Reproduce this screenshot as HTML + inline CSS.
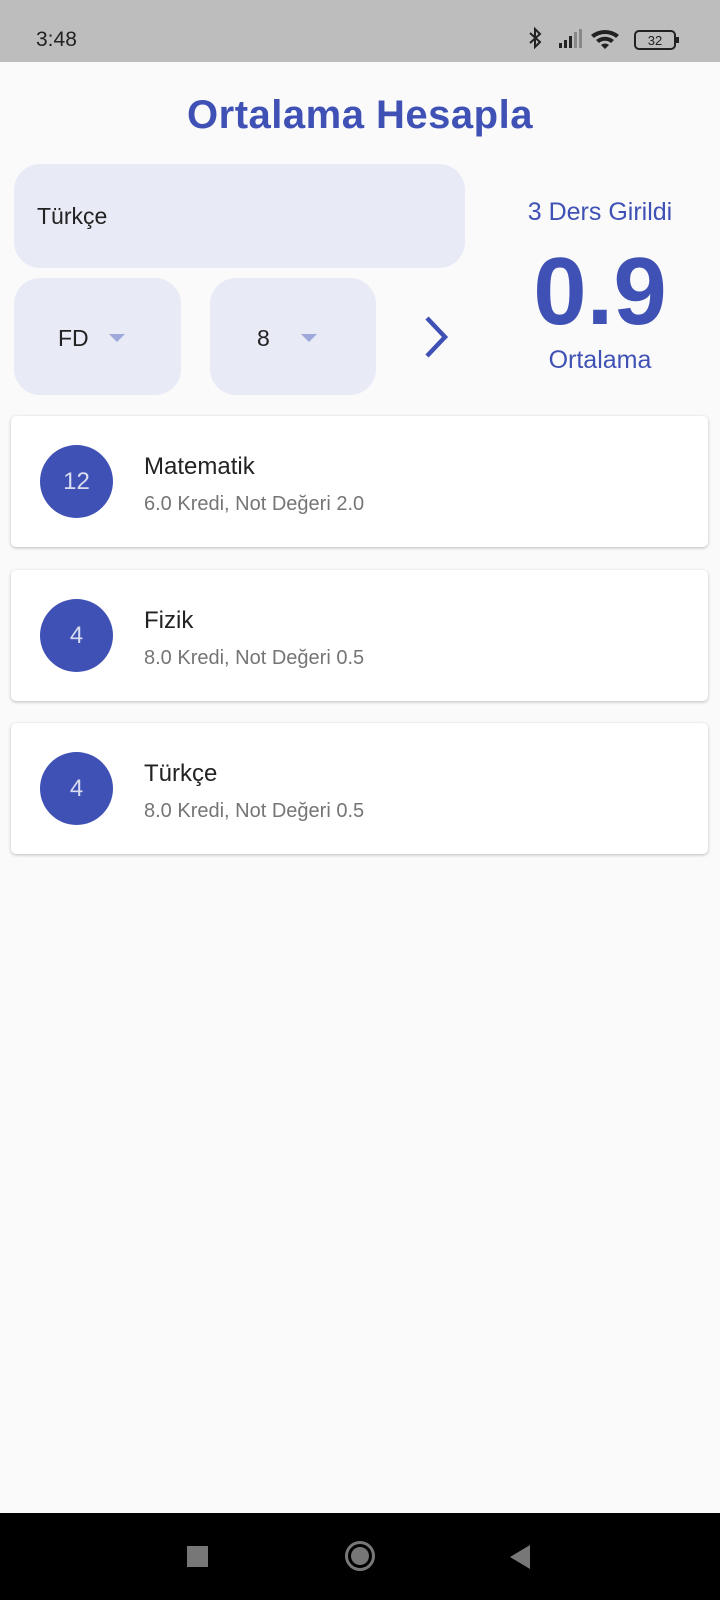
<!DOCTYPE html>
<html><head><meta charset="utf-8"><style>
*{margin:0;padding:0;box-sizing:border-box}
body{width:720px;height:1600px;background:#fafafa;font-family:"Liberation Sans",sans-serif;position:relative;overflow:hidden}
.abs{position:absolute}
.sb{left:0;top:0;width:720px;height:62px;background:#bdbdbd}
.time{left:36px;top:28px;font-size:21px;color:#222}
.title{left:0;width:720px;top:93px;text-align:center;font-size:40px;font-weight:bold;color:#3f51b5;letter-spacing:0.5px}
.field{background:#e8eaf6;border-radius:26px}
.blue{color:#3f51b5}
.card{left:11px;width:697px;height:131px;background:#fff;border-radius:5px;box-shadow:0 1px 3px rgba(0,0,0,.25)}
.av{left:29px;top:29px;width:73px;height:73px;border-radius:50%;background:#3f51b5;color:#d9dcf0;font-size:24px;text-align:center;line-height:73px}
.ct{left:133px;top:37px;font-size:24px;color:#222}
.cs{left:133px;top:77px;font-size:20px;color:#757575}
.tri{width:0;height:0;border-left:8px solid transparent;border-right:8px solid transparent;border-top:8px solid #9fa8da}
.nav{left:0;top:1513px;width:720px;height:87px;background:#000}
</style></head><body>
<div class="abs sb"></div>
<div class="abs time">3:48</div>
<svg class="abs" style="left:527px;top:26px" width="160" height="28" viewBox="0 0 160 28">
<path d="M3 7l10 9-5 5V3l5 5-10 9" fill="none" stroke="#222" stroke-width="2"/>
<rect x="32" y="17" width="3" height="5" fill="#222"/><rect x="37" y="14" width="3" height="8" fill="#222"/><rect x="42" y="10" width="3" height="12" fill="#222"/><rect x="47" y="6" width="3" height="16" fill="#888"/><rect x="52" y="3" width="3" height="19" fill="#888"/>
<path d="M64 9a22 22 0 0 1 28 0l-3 3a17 17 0 0 0-22 0zM69 14a14 14 0 0 1 18 0l-3 3a9 9 0 0 0-12 0zM74 19a6 6 0 0 1 8 0l-4 4z" fill="#222"/>
<rect x="108" y="5" width="40" height="18" rx="4" fill="none" stroke="#222" stroke-width="2"/><rect x="149" y="11" width="3" height="6" fill="#222"/>
<text x="128" y="19" font-size="13" text-anchor="middle" fill="#222" font-family="Liberation Sans">32</text>
</svg>
<div class="abs title">Ortalama Hesapla</div>
<div class="abs field" style="left:14px;top:164px;width:451px;height:104px"></div>
<div class="abs" style="left:37px;top:203px;font-size:23px;color:#222">Türkçe</div>
<div class="abs field" style="left:14px;top:278px;width:167px;height:117px"></div>
<div class="abs" style="left:58px;top:325px;font-size:23px;color:#222">FD</div>
<div class="abs tri" style="left:109px;top:334px"></div>
<div class="abs field" style="left:210px;top:278px;width:166px;height:117px"></div>
<div class="abs" style="left:257px;top:325px;font-size:23px;color:#222">8</div>
<div class="abs tri" style="left:301px;top:334px"></div>
<svg class="abs" style="left:422px;top:314px" width="30" height="46" viewBox="0 0 30 46"><path d="M5 4l18 19-18 19" fill="none" stroke="#3f51b5" stroke-width="4.5"/></svg>
<div class="abs blue" style="left:480px;width:240px;text-align:center;top:198px;font-size:25px">3 Ders Girildi</div>
<div class="abs blue" style="left:480px;width:240px;text-align:center;top:242px;font-size:96px;font-weight:bold;line-height:100px">0.9</div>
<div class="abs blue" style="left:480px;width:240px;text-align:center;top:346px;font-size:25px">Ortalama</div>

<div class="abs card" style="top:416px"><div class="abs av">12</div><div class="abs ct">Matematik</div><div class="abs cs">6.0 Kredi, Not Değeri 2.0</div></div>
<div class="abs card" style="top:570px"><div class="abs av">4</div><div class="abs ct">Fizik</div><div class="abs cs">8.0 Kredi, Not Değeri 0.5</div></div>
<div class="abs card" style="top:723px"><div class="abs av">4</div><div class="abs ct">Türkçe</div><div class="abs cs">8.0 Kredi, Not Değeri 0.5</div></div>

<div class="abs nav"></div>
<div class="abs" style="left:187px;top:1546px;width:21px;height:21px;background:#777"></div>
<div class="abs" style="left:345px;top:1541px;width:30px;height:30px;border-radius:50%;border:3px solid #777"></div>
<div class="abs" style="left:351px;top:1547px;width:18px;height:18px;border-radius:50%;background:#777"></div>
<div class="abs" style="left:510px;top:1545px;width:0;height:0;border-top:12px solid transparent;border-bottom:12px solid transparent;border-right:20px solid #777"></div>
</body></html>
